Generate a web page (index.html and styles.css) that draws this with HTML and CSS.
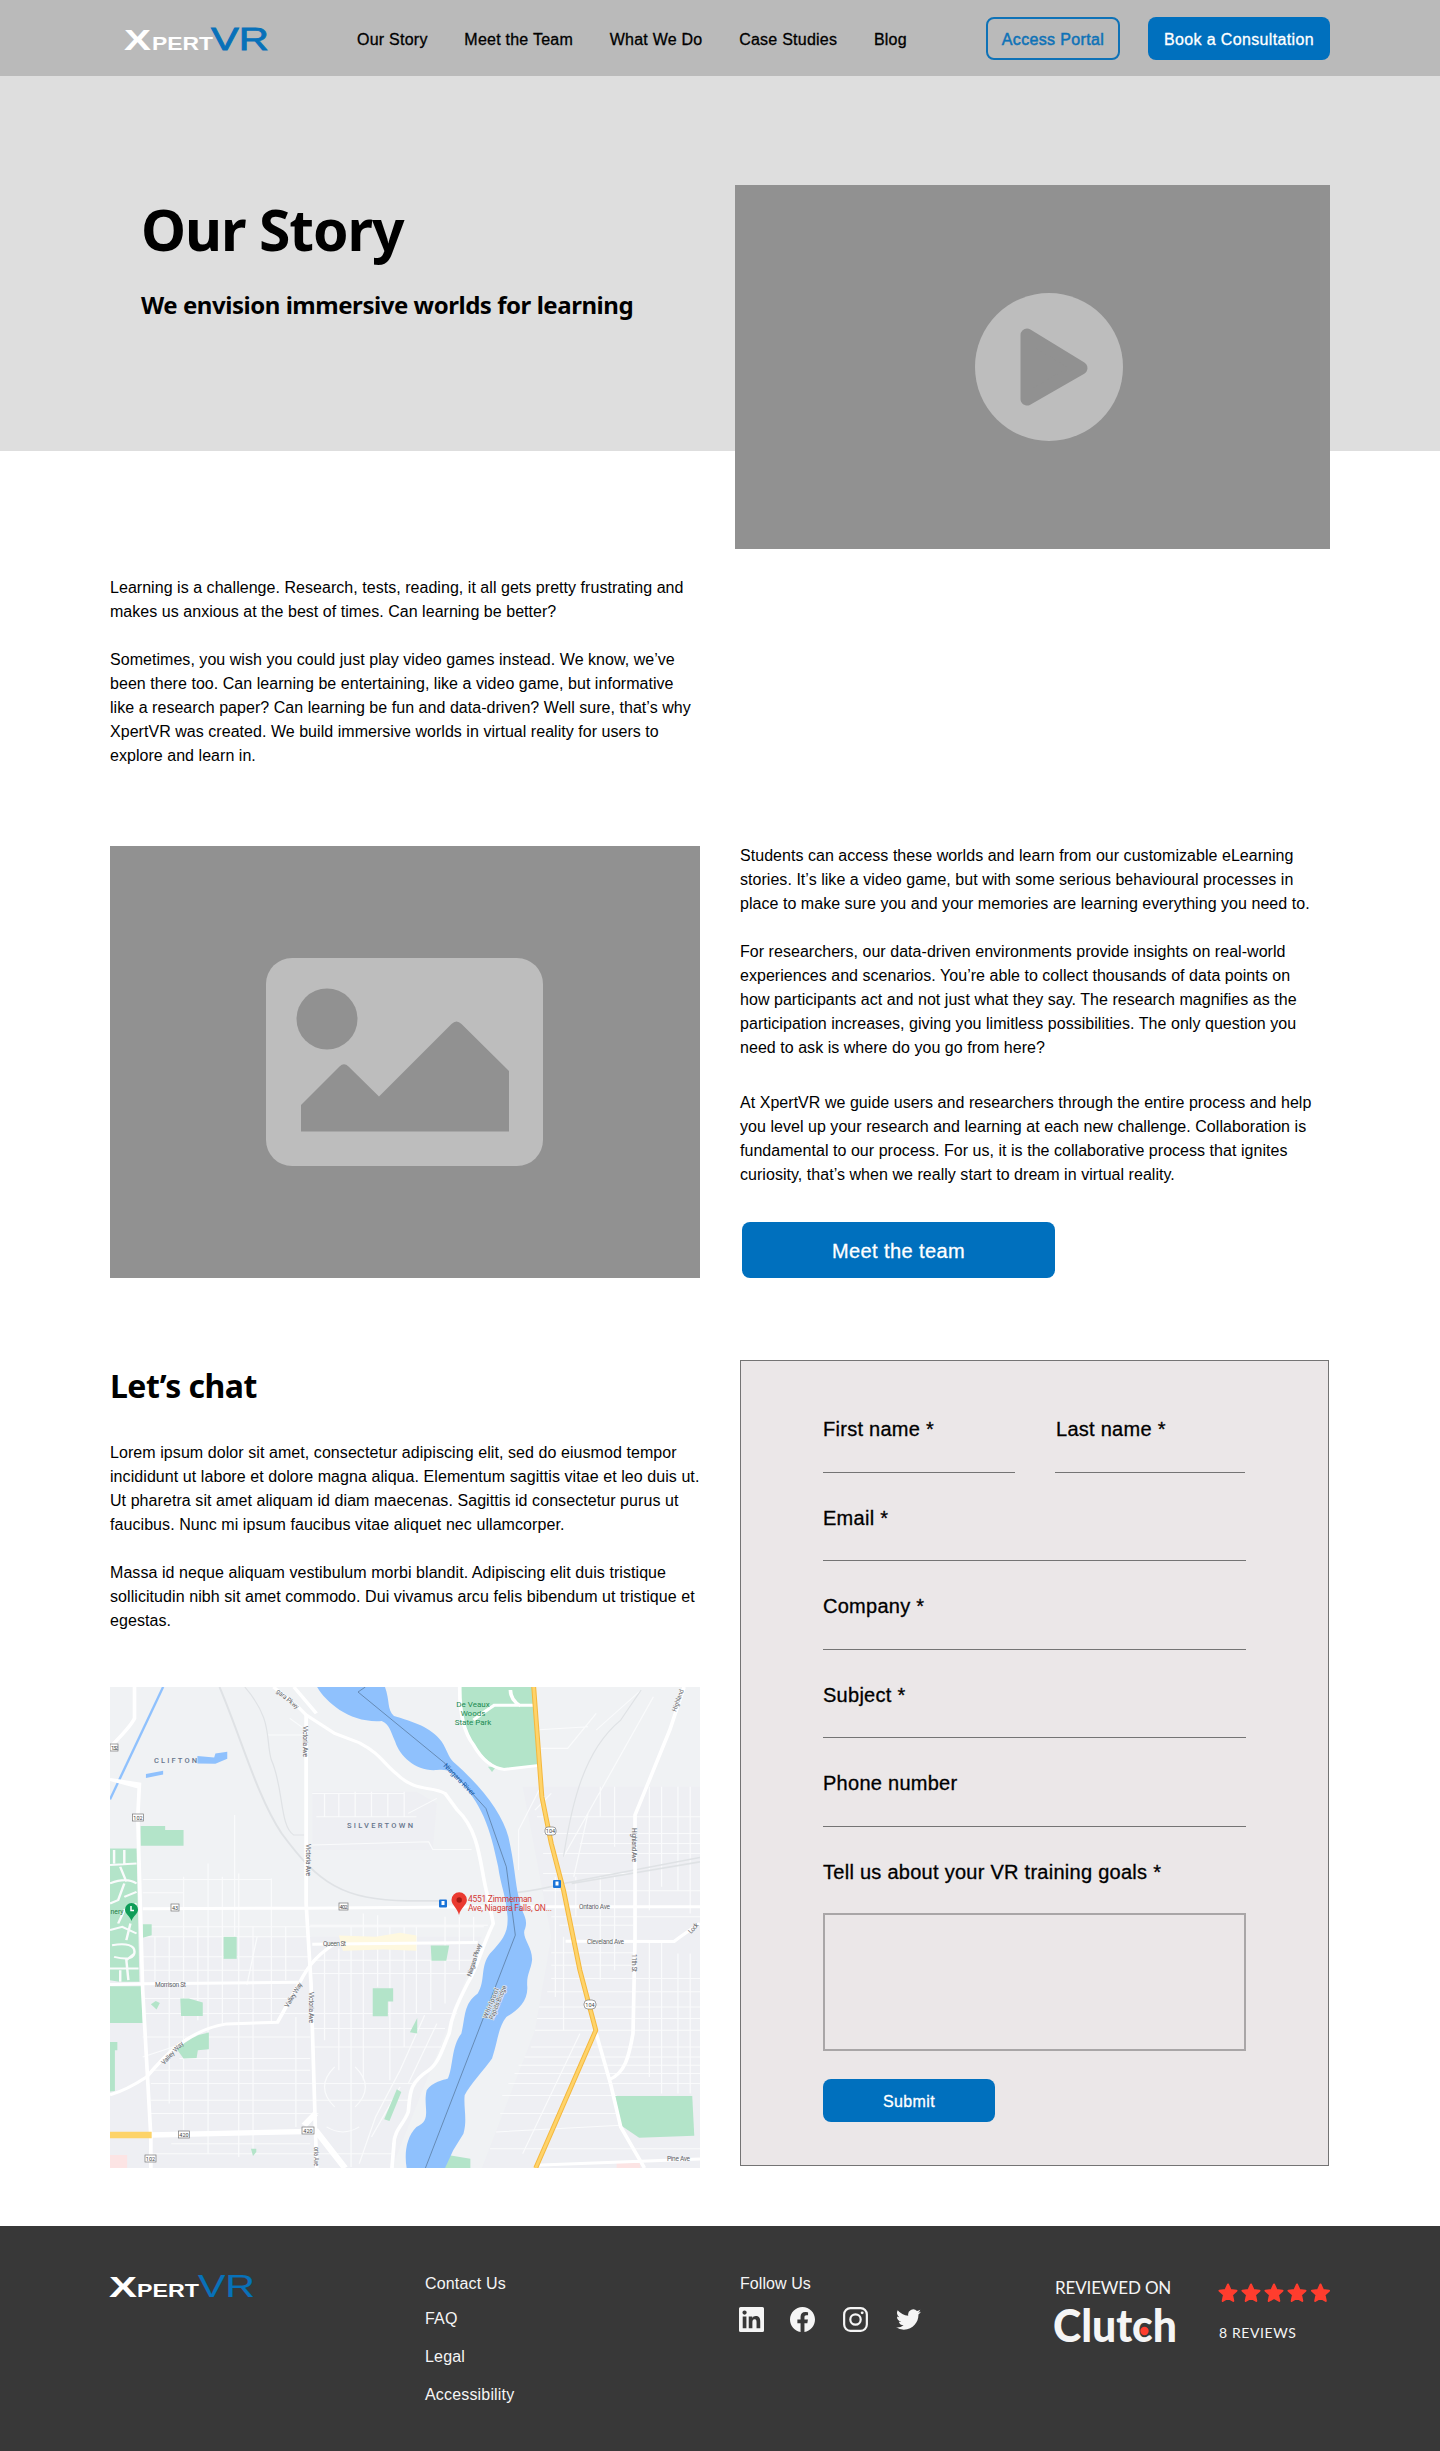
FILE: index.html
```html
<!DOCTYPE html>
<html lang="en">
<head>
<meta charset="utf-8">
<title>XpertVR – Our Story</title>
<link rel="stylesheet" href="styles.css">
</head>
<body>
<header class="topbar">
  <svg class="logo" viewBox="0 0 144 26" role="img" aria-label="XpertVR">
    <text class="logo-x" x="-1" y="22" textLength="27" lengthAdjust="spacingAndGlyphs">X</text>
    <text class="logo-pert" x="27" y="22" textLength="61" lengthAdjust="spacingAndGlyphs">PERT</text>
    <text class="logo-vr" x="86" y="22" textLength="58" lengthAdjust="spacingAndGlyphs">VR</text>
  </svg>
  <nav class="nav">
    <a>Our Story</a><a>Meet the Team</a><a>What We Do</a><a>Case Studies</a><a>Blog</a>
  </nav>
  <div class="actions">
    <a class="btn btn-outline">Access Portal</a>
    <a class="btn btn-book">Book a Consultation</a>
  </div>
</header>

<section class="hero">
  <div class="hero-copy">
    <h1>Our Story</h1>
    <h2>We envision immersive worlds for learning</h2>
  </div>
  <div class="video">
    <svg width="148" height="148" viewBox="0 0 148 148">
      <circle cx="74" cy="74" r="74" fill="#bdbdbd"/>
      <path d="M52 42L106 75L52 106Z" fill="#919191" stroke="#919191" stroke-width="13" stroke-linejoin="round"/>
    </svg>
  </div>
</section>

<main>
  <section class="intro copy">
    <p>Learning is a challenge. Research, tests, reading, it all gets pretty frustrating and<br>makes us anxious at the best of times. Can learning be better?</p>
    <p>Sometimes, you wish you could just play video games instead. We know, we’ve<br>been there too. Can learning be entertaining, like a video game, but informative<br>like a research paper? Can learning be fun and data-driven? Well sure, that’s why<br>XpertVR was created. We build immersive worlds in virtual reality for users to<br>explore and learn in.</p>
  </section>

  <section class="split story">
    <div class="photo">
      <svg width="277" height="208" viewBox="0 0 277 208">
        <rect width="277" height="208" rx="26" fill="#bdbdbd"/>
        <circle cx="61" cy="61" r="30.5" fill="#919191"/>
        <path d="M35 147L73.500 108.500Q78 104 82.500 108.500L113 138.500L185.500 66Q190.500 61 195.500 66L243 113V173.500H35Z" fill="#919191"/>
      </svg>
    </div>
    <div class="copy">
      <p>Students can access these worlds and learn from our customizable eLearning<br>stories. It’s like a video game, but with some serious behavioural processes in<br>place to make sure you and your memories are learning everything you need to.</p>
      <p>For researchers, our data-driven environments provide insights on real-world<br>experiences and scenarios. You’re able to collect thousands of data points on<br>how participants act and not just what they say. The research magnifies as the<br>participation increases, giving you limitless possibilities. The only question you<br>need to ask is where do you go from here?</p>
      <p class="closing">At XpertVR we guide users and researchers through the entire process and help<br>you level up your research and learning at each new challenge. Collaboration is<br>fundamental to our process. For us, it is the collaborative process that ignites<br>curiosity, that’s when we really start to dream in virtual reality.</p>
      <a class="btn btn-team">Meet the team</a>
    </div>
  </section>

  <section class="split contact">
    <div class="chat">
      <h3>Let’s chat</h3>
      <div class="copy">
        <p>Lorem ipsum dolor sit amet, consectetur adipiscing elit, sed do eiusmod tempor<br>incididunt ut labore et dolore magna aliqua. Elementum sagittis vitae et leo duis ut.<br>Ut pharetra sit amet aliquam id diam maecenas. Sagittis id consectetur purus ut<br>faucibus. Nunc mi ipsum faucibus vitae aliquet nec ullamcorper.</p>
        <p>Massa id neque aliquam vestibulum morbi blandit. Adipiscing elit duis tristique<br>sollicitudin nibh sit amet commodo. Dui vivamus arcu felis bibendum ut tristique et<br>egestas.</p>
      </div>
      <svg class="map" viewBox="0 0 590 481">
        <g transform="scale(.40859 .33356) translate(-50 -51)">
          <rect x="50" y="51" width="1444" height="1442" fill="#f0f2f4"/>
          <!-- built-up blocks -->
          <g fill="#eeeff3">
            <path d="M50 800H960L880 1060L740 1493H50Z"/>
            <path d="M545 365H800L850 400L840 540H545Z"/>
            <path d="M1060 350H1494V1493H960L1090 1080L1130 800Z"/>
          </g>
          <!-- side streets -->
          <g class="lane">
            <path d="M130 770H965M130 800H540M130 860H540M130 900H540M545 870H940M545 910H925M130 985H500M130 1030H900M545 1075H870M130 1100H540M545 1130H860M220 1165H540M150 1200H540M150 1240H790M150 1290H780M150 1330H560M200 1420H540M150 1450H740M130 628H445M130 668H230M540 765H975"/>
            <path d="M160 800V930M195 800V1300M230 620V1380M265 770V1050M290 580V1450M325 620V1060M365 610V1460M400 770V1440M445 625V1060M480 770V930M505 1040V1370M575 835V1110M610 835V1200M640 770V1490M670 730V1230M705 735V950M735 770V1230M770 770V1130M800 770V1030M835 870V1020M870 740V1000M905 740V900M940 740V820M355 435V800"/>
            <path d="M545 370H770M555 440H800M545 525L830 515L840 538H935M575 370V440M610 370V440M650 365V440M690 365V440M730 370V440M770 365V440M780 430L850 385"/>
            <path d="M1095 440H1494M1110 490H1494M1200 520H1494M1110 550H1494M1110 610H1330M1110 662H1494M1130 740H1494M1150 765H1330M1130 848H1330M1130 885H1340M1130 925H1494M1120 965H1494M1100 1010H1494M1095 1045H1494M1090 1080H1494M1080 1130H1494M1065 1160H1494M1050 1185H1494M1040 1210H1494M1025 1240H1494M1010 1276H1290M1005 1330H1300M995 1385L1300 1365M980 1435H1494"/>
            <path d="M1250 350V440M1285 350V530M1370 350V720M1400 350V650M1440 350V660M1470 350V730M1140 620V980M1160 800V1080M1190 620V740M1220 430L1185 620M1250 620V930M1285 620V900M1370 810V1220M1400 810V1270M1440 850V1270M1470 850V1270M1200 1090L1060 1450M1100 360L1050 480V600M1130 370L1090 420M1090 180L1220 170M1105 235H1170L1240 130M1240 180L1350 60M1380 80L1160 560"/>
            <path d="M820 1035L760 1200L700 1340L660 1480M850 1060L780 1240M760 1250L690 1400M600 1190Q550 1250 600 1310M650 1190Q700 1250 650 1310M580 1370Q620 1400 660 1370"/>
            <path d="M435 195H530M490 145L530 180M130 1160L230 1120M385 945L410 800"/>
          </g>
          <!-- railways -->
          <g fill="none" stroke="#dfe2e5" stroke-width="5">
            <path d="M318 51C370 200 410 380 470 490C560 640 620 690 780 692H860M1040 668Q1100 660 1160 640L1494 562M1180 640L1494 575"/>
            <path d="M380 51C450 150 430 210 445 270C475 350 465 470 500 495H525M1160 560C1180 400 1210 240 1300 150L1350 60" stroke-width="3"/>
          </g>
          <!-- parks -->
          <g fill="#b3e4c9">
            <path d="M906 51H1087L1099 284L1014 300C970 280 935 230 920 170Q905 100 906 51Z"/>
            <path d="M975 290H995L985 306Z"/>
            <path d="M125 468H185V480H230V527H125Z"/>
            <path d="M50 535H115L122 935H72L50 930Z"/>
            <path d="M130 762H152V795L130 803Z"/>
            <path d="M50 948H128L130 1058H50Z"/>
            <path d="M328 800H360V866H328Z"/>
            <path d="M835 826H880L873 872H837Z"/>
            <path d="M693 954H743V994H730V1038H693Z"/>
            <path d="M222 985H243L277 997V1037H224Z"/>
            <path d="M150 1002L162 992L172 998L164 1018Z"/>
            <path d="M292 1087V1137L265 1140L262 1163L230 1165L214 1138Q250 1095 292 1087Z"/>
            <path d="M50 1115H68V1140H62V1262L50 1264Z"/>
            <path d="M802 1043V1090L784 1086Z"/>
            <path d="M752 1257L763 1265L734 1352L721 1347Z"/>
            <path d="M1286 1277H1475L1480 1396L1345 1402L1300 1365Z"/>
            <path d="M877 1454L932 1465V1493H868Z"/>
            <path d="M395 1435H408V1445L400 1457Z"/>
          </g>
          <g class="lane path">
            <path d="M50 585L115 580M60 540V580M85 540V580M50 640Q90 620 115 640M75 590L90 635M50 700L70 690L85 640M70 760L85 720L115 700M50 780L80 770L115 790M85 680L115 665M55 825Q110 815 110 845T60 860M110 850L90 870L95 930M50 895H120M75 900V935M100 760L90 810"/>
          </g>
          <path d="M50 1454H92V1493H50ZM1290 1478L1348 1475V1493H1290Z" fill="#fce4e4"/>
          <path d="M610 796L700 800L760 788L800 796V842L720 838L620 842Z" fill="#fef8df"/>
          <!-- water -->
          <g fill="#8fc1fd">
            <path d="M557 51H723C735 90 728 120 745 138C790 155 835 170 862 215C875 240 878 260 890 275C960 350 1010 430 1025 500C1040 580 1042 640 1050 680C1055 730 1075 740 1066 775C1055 800 1085 830 1083 870C1080 900 1070 910 1071 945C1075 990 1050 1020 1020 1040C1000 1070 1000 1110 985 1165C965 1200 930 1245 918 1275C915 1310 925 1350 915 1390L890 1440L870 1493H776C770 1450 775 1400 800 1370C840 1350 815 1310 825 1260C840 1235 865 1230 877 1225C890 1190 885 1130 910 1090C920 1040 915 1000 950 970C970 930 955 890 980 850C1010 810 1025 790 1023 740C1020 680 1005 640 1000 590C980 470 960 400 900 325C885 305 875 295 850 300C800 305 760 260 748 215C735 180 735 165 715 153C640 160 580 100 557 51Z"/>
            <path d="M264 258L305 262L308 250L337 245V266L308 281L264 280Z"/>
            <path d="M138 312L180 302V313L138 324Z"/>
          </g>
          <path d="M180 51L50 388" stroke="#8fc1fd" stroke-width="6"/>
          <path d="M675 51L657 66L870 280L970 415L1020 590L1042 795L822 1493" fill="none" stroke="#57789a" stroke-width="2"/>
          <!-- main roads -->
          <g fill="none" stroke="#fff" stroke-width="9">
            <path d="M110 51V145Q100 170 55 225M50 328L122 342L118 440L130 960L150 1400V1493M50 328L122 352"/>
            <path d="M450 51L510 110L530 135L600 190L660 218C710 250 720 280 750 310C800 370 835 345 870 370L900 420C960 490 955 600 975 680L988 760C960 830 950 890 925 940C900 1000 885 1040 880 1090C865 1130 855 1180 830 1200C780 1240 785 1270 780 1325C770 1360 745 1380 745 1420L740 1493"/>
            <path d="M530 135V700L542 940L553 1390L556 1493M500 51L555 130M130 716L530 714L965 710M1060 710L1494 710"/>
            <path d="M545 822L950 817M50 943L130 941L510 936M1165 813L1430 814Q1480 770 1494 760"/>
            <path d="M595 825C550 860 530 900 515 935L460 1056L335 1061C240 1080 180 1160 140 1220Q90 1260 50 1274"/>
            <path d="M1455 51L1420 180L1335 435V800L1330 1090C1320 1160 1310 1210 1272 1228M1240 1090L1275 1240L1300 1370L1358 1493M1090 1485L1300 1475L1494 1466M906 51Q905 170 940 225Q970 290 1014 298L1100 286M940 150Q960 130 990 106H1088M1030 60Q1030 90 1055 108"/>
          </g>
          <path d="M150 1394L555 1383L625 1493M553 1330L525 1365" fill="none" stroke="#fff" stroke-width="16"/>
          <path d="M50 1394H152" stroke="#fdd368" stroke-width="20"/>
          <path d="M1087 51L1107 380L1130 520L1160 660L1200 900L1239 1080L1092 1493" fill="none" stroke="#f5b83d" stroke-width="12" stroke-linejoin="round"/>
          <path d="M1087 51L1107 380L1130 520L1160 660L1200 900L1239 1080L1092 1493" fill="none" stroke="#fed36a" stroke-width="7" stroke-linejoin="round"/>
        </g>
        <!-- route shields -->
        <g class="shield">
          <rect x="0" y="57" width="8" height="7"/><rect x="22.500" y="127" width="11" height="7"/><rect x="61" y="217" width="8" height="7"/><rect x="229" y="216" width="9" height="7"/><rect x="68.500" y="444" width="11" height="7"/><rect x="192" y="440" width="12" height="7"/><rect x="35" y="468" width="11" height="7"/>
          <rect x="435" y="140" width="11" height="8" rx="3"/><rect x="474" y="313" width="12" height="9" rx="4"/>
        </g>
        <g class="num">
          <text x="4.500" y="62.500" textLength="7">132</text><text x="28" y="132.500">102</text><text x="65" y="222.500">43</text><text x="233.500" y="221.500" textLength="8">402</text><text x="74" y="449.500">420</text><text x="198" y="445.500">420</text><text x="40.500" y="473.500">102</text><text x="440.500" y="146">104</text><text x="480" y="319.500">104</text>
        </g>
        <!-- place names -->
        <g class="district">
          <text x="44" y="75.500" textLength="43">CLIFTON</text>
          <text x="237" y="140.500" textLength="66">SILVERTOWN</text>
        </g>
        <g class="park"><text x="363" y="20">De Veaux</text><text x="363" y="29">Woods</text><text x="363" y="38">State Park</text></g>
        <g class="street">
          <text x="213" y="259" textLength="23">Queen St</text>
          <text x="45" y="299.500" textLength="31">Morrison St</text>
          <text x="469" y="222" textLength="31">Ontario Ave</text>
          <text x="477" y="256.500" textLength="37">Cleveland Ave</text>
          <text x="557" y="474" textLength="23">Pine Ave</text>
          <text transform="translate(193 39) rotate(90)" textLength="31">Victoria Ave</text>
          <text transform="translate(195.500 157) rotate(90)" textLength="32">Victoria Ave</text>
          <text transform="translate(199 305) rotate(90)" textLength="31">Victoria Ave</text>
          <text transform="translate(204 460) rotate(90)" textLength="19" lengthAdjust="spacingAndGlyphs">oria Ave</text>
          <text transform="translate(522 141) rotate(90)" textLength="34">Highland Ave</text>
          <text transform="translate(522 267) rotate(90)" textLength="18">11th St</text>
          <text transform="translate(566 25) rotate(-70)" textLength="23" lengthAdjust="spacingAndGlyphs">Highland</text>
          <text transform="translate(166 5) rotate(40)" textLength="27" lengthAdjust="spacingAndGlyphs">gara Pkwy</text>
          <text transform="translate(361 290) rotate(-72)" textLength="34">Niagara Pkwy</text>
          <text transform="translate(178 321) rotate(-59)" textLength="28">Valley Way</text>
          <text transform="translate(54 378) rotate(-47)" textLength="29">Valley Way</text>
          <text transform="translate(581 247) rotate(-48)" textLength="12">Lock</text>
          <g class="bridge">
            <text transform="translate(377 332) rotate(-68)" textLength="32">Whirlpool</text>
            <text transform="translate(383 333) rotate(-68)" textLength="36">Rapids Bridge</text>
          </g>
        </g>
        <text class="river" transform="translate(333 79) rotate(46)" textLength="42">Niagara River</text>
        <text class="cemetery" x="0.500" y="227" textLength="13" lengthAdjust="spacingAndGlyphs">nery</text>
        <!-- markers -->
        <path d="M21.500 234C20 229 15 227 15 222.500A6.500 6.500 0 0 1 28 222.500C28 227 23 229 21.500 234Z" fill="#0f9d58"/>
        <path d="M21 219V223.500H24" fill="none" stroke="#fff" stroke-width="1.500"/>
        <g fill="#1a73d8"><rect x="329" y="212.500" width="8" height="8" rx="1"/><rect x="443" y="193" width="8" height="8" rx="1"/></g>
        <g fill="#fff"><rect x="331.500" y="214" width="3" height="4"/><rect x="445.500" y="194.500" width="3" height="4"/></g>
        <path d="M349 228C347.500 221 341.500 218 341.500 213A7.700 7.700 0 0 1 356.900 213C356.900 218 350.500 221 349 228Z" fill="#ea3a30"/>
        <circle cx="349.200" cy="213" r="2.700" fill="#a51b14"/>
        <g class="pin-label"><text x="358" y="214.500" textLength="64">4551 Zimmerman</text><text x="358" y="223.500" textLength="84">Ave, Niagara Falls, ON...</text></g>
      </svg>
    </div>

    <form class="form">
      <div class="row">
        <label class="field">First name *<span class="line"></span></label>
        <label class="field">Last name *<span class="line"></span></label>
      </div>
      <label class="field">Email *<span class="line"></span></label>
      <label class="field">Company *<span class="line"></span></label>
      <label class="field">Subject *<span class="line"></span></label>
      <label class="field">Phone number<span class="line"></span></label>
      <label class="field goals">Tell us about your VR training goals *<span class="area"></span></label>
      <a class="btn btn-submit">Submit</a>
    </form>
  </section>
</main>

<footer class="footer">
  <div class="foot-brand">
    <svg class="logo" viewBox="0 0 144 26" role="img" aria-label="XpertVR">
      <text class="logo-x" x="-1" y="22" textLength="28" lengthAdjust="spacingAndGlyphs">X</text>
      <text class="logo-pert" x="27" y="22" textLength="62" lengthAdjust="spacingAndGlyphs">PERT</text>
      <text class="logo-vr light" x="88" y="22" textLength="57" lengthAdjust="spacingAndGlyphs">VR</text>
    </svg>
  </div>
  <div class="foot-links"><a>Contact Us</a><a>FAQ</a><a>Legal</a><a>Accessibility</a></div>
  <div class="foot-social">
    <span>Follow Us</span>
    <div class="icons">
      <svg width="25" height="25" viewBox="0 0 24 24"><path fill="#f5f5f5" fill-rule="evenodd" d="M1.500 0h21A1.500 1.500 0 0 1 24 1.500v21a1.500 1.500 0 0 1-1.500 1.500h-21A1.500 1.500 0 0 1 0 22.500v-21A1.500 1.500 0 0 1 1.500 0ZM3.560 9h3.560v11.450H3.560ZM5.340 3.300a2.060 2.060 0 1 1 0 4.130 2.060 2.060 0 0 1 0-4.130ZM9.350 9h3.410v1.570c.5-.9 1.640-1.850 3.370-1.850 3.600 0 4.270 2.370 4.270 5.460v6.270h-3.560v-5.570c0-1.330-.02-3.040-1.850-3.040s-2.130 1.450-2.130 2.940v5.670H9.350Z"/></svg>
      <svg width="25" height="25" viewBox="0 0 24 24"><path fill="#f5f5f5" d="M24 12.070C24 5.400 18.630 0 12 0S0 5.400 0 12.070C0 18.100 4.390 23.090 10.130 24v-8.440H7.080v-3.490h3.050V9.410c0-3.020 1.790-4.690 4.530-4.690 1.310 0 2.680.24 2.680.24v2.970h-1.510c-1.490 0-1.960.93-1.960 1.890v2.250h3.330l-.53 3.490h-2.800V24C19.610 23.090 24 18.100 24 12.070Z"/></svg>
      <svg width="25" height="25" viewBox="0 0 24 24" fill="none" stroke="#f5f5f5" stroke-width="2.100"><rect x="1.100" y="1.100" width="21.800" height="21.800" rx="6"/><circle cx="12" cy="12" r="5"/><circle cx="18.400" cy="5.600" r="1.400" fill="#f5f5f5" stroke="none"/></svg>
      <svg width="25" height="25" viewBox="0 0 24 24"><path fill="#f5f5f5" d="M23.950 4.570a10 10 0 0 1-2.820.77 4.960 4.960 0 0 0 2.160-2.720c-.95.560-2 .96-3.130 1.180a4.920 4.920 0 0 0-8.380 4.480A13.930 13.930 0 0 1 1.640 3.160a4.920 4.920 0 0 0 1.520 6.570 4.900 4.900 0 0 1-2.230-.61v.06a4.920 4.920 0 0 0 3.950 4.830 5 5 0 0 1-2.210.08 4.940 4.940 0 0 0 4.600 3.420A9.870 9.870 0 0 1 0 19.540a13.990 13.990 0 0 0 7.550 2.210c9.050 0 14-7.500 14-13.990 0-.21 0-.42-.02-.63a9.940 9.940 0 0 0 2.420-2.560Z"/></svg>
    </div>
  </div>
  <div class="clutch">
    <span class="reviewed">REVIEWED ON</span>
    <svg width="124" height="40" viewBox="0 0 124 40" role="img" aria-label="Clutch">
      <text class="clutch-name" x="-2" y="35" textLength="124" lengthAdjust="spacingAndGlyphs">Clutch</text>
      <circle cx="89.500" cy="24" r="4.200" fill="#ff3d2e"/>
    </svg>
  </div>
  <div class="rating">
    <svg width="113" height="20" viewBox="0 0 113 20" fill="#ff3d2e" stroke="#ff3d2e" stroke-width="2" stroke-linejoin="round">
      <defs><path id="star" d="M10 1.500L12.500 7L18.500 7.700L14 11.800L15.300 18L10 15L4.700 18L6 11.800L1.500 7.700L7.500 7Z"/></defs>
      <use href="#star"/><use href="#star" x="23"/><use href="#star" x="46"/><use href="#star" x="69"/><use href="#star" x="92.500"/>
    </svg>
    <span class="count">8 REVIEWS</span>
  </div>
</footer>
</body>
</html>
```

FILE: styles.css
```css
* { box-sizing: border-box; }

body {
  margin: 0;
  background: #fff;
  color: #000;
  font: 16px/24px "Liberation Sans", Arial, sans-serif;
}

h1, h2, h3, p { margin: 0; }

h1, h2, h3 { font-family: "Noto Sans", sans-serif; font-weight: 700; }

/* header */
.topbar {
  display: flex;
  height: 76px;
  padding: 0 110px 0 125px;
  background: #bababa;
}

.logo { display: block; width: 144px; height: 26px; overflow: visible; }
.topbar .logo { margin-top: 28px; }
.logo-x { font: 700 29px "Liberation Sans", sans-serif; fill: #fff; }
.logo-pert { font: 700 18px "Liberation Sans", sans-serif; fill: #fff; }
.logo-vr { font: 400 31.500px "Liberation Sans", sans-serif; fill: #0871b9; stroke: #0871b9; stroke-width: 0.8px; }
.logo-vr.light { stroke-width: 0.2px; }

.nav {
  display: flex;
  gap: 36.700px;
  margin: 28px 0 0 88px;
  letter-spacing: 0.240px;
  white-space: nowrap;
  -webkit-text-stroke: 0.300px currentColor;
}

.actions { display: flex; gap: 28px; margin: 17px 0 0 auto; }

.btn {
  display: flex;
  align-items: center;
  justify-content: center;
  height: 43px;
  padding-top: 2px;
  border-radius: 8px;
  background: #0070be;
  color: #fff;
  letter-spacing: 0.360px;
  white-space: nowrap;
  -webkit-text-stroke: 0.300px currentColor;
}

.btn-outline { width: 134px; border: 2px solid #0e72b7; background: none; color: #0e72b7; -webkit-text-stroke-width: 0.500px; }
.btn-book { width: 182px; }

/* hero */
.hero {
  display: flex;
  justify-content: space-between;
  height: 375px;
  padding: 109px 110px 0 141px;
  background: #dedede;
}

.hero h1 { margin-top: 6px; font-size: 57px; line-height: 76px; letter-spacing: -1.100px; }
.hero h2 { margin-top: 20px; font-size: 24px; line-height: 36px; letter-spacing: -0.460px; }

.video, .photo { display: flex; align-items: center; justify-content: center; background: #919191; }
.video { width: 595px; height: 364px; padding-left: 32px; }

/* body */
main { padding: 125px 110px 60px; }

.copy { letter-spacing: 0.040px; white-space: nowrap; }
.copy p + p { margin-top: 24px; }
.copy p.closing { margin-top: 31px; }

.split { display: grid; grid-template-columns: 590px 590px; column-gap: 40px; }

.story { margin-top: 78px; }
.photo { height: 432px; padding-right: 1px; }
.story .copy { margin-top: -2px; }

.btn-team {
  width: 313px;
  height: 56px;
  margin: 35px 0 0 2px;
  font-size: 20px;
  letter-spacing: 0.400px;
}

.contact { margin-top: 82px; }
.chat h3 { padding-top: 4px; font-size: 32px; line-height: 44px; letter-spacing: -0.550px; }
.chat .copy { margin-top: 33px; letter-spacing: 0.070px; }
.map { display: block; width: 590px; height: 481px; margin-top: 54px; }

/* map parts */
.lane { fill: none; stroke: #fafbfc; stroke-width: 3px; }
.lane.path { stroke-width: 6px; }
.shield { fill: #fff; stroke: #777; stroke-width: 0.700px; }
.num { font: 5.500px Roboto, sans-serif; fill: #444; text-anchor: middle; }
.district { font: 500 7.500px Roboto, sans-serif; fill: #66758c; }
.park { font: 8px Roboto, sans-serif; fill: #1b8a52; text-anchor: middle; }
.street { font: 6.500px Roboto, sans-serif; fill: #5d6166; }
.bridge { stroke: #e4e9ee; stroke-width: 1.500px; paint-order: stroke; }
.river { font: 7px Roboto, sans-serif; fill: #1559a8; }
.cemetery { font: 8px Roboto, sans-serif; fill: #1b7a45; }
.pin-label { font: 8.500px Roboto, sans-serif; fill: #d23a36; }

/* contact form */
.form {
  width: 589px;
  height: 806px;
  padding: 56px 82px 0;
  border: 1px solid #747474;
  background: #ebe7e8;
  font-size: 20px;
  letter-spacing: 0.270px;
}

.row { display: grid; grid-template-columns: 192px 190px; column-gap: 40px; }
.row .field:last-child { text-indent: 1px; }

.field {
  display: flex;
  flex-direction: column;
  height: 88.600px;
  white-space: nowrap;
  -webkit-text-stroke: 0.300px currentColor;
}

.line { height: 1px; margin-top: 30.500px; background: #747474; }
.goals { height: auto; }
.area { height: 138px; margin-top: 29.500px; border: 2px solid #a9a6a7; }
.btn-submit { width: 172px; margin-top: 28px; font-size: 16px; }

/* footer */
.footer {
  display: grid;
  grid-template-columns: 314px 315px 315px 164px 1fr;
  height: 227px;
  margin-top: -2px;
  padding: 46px 109px 0 110px;
  background: #383838;
  color: #f5f5f5;
}

.foot-brand { padding-top: 3px; }
.foot-links { display: flex; flex-direction: column; padding-left: 1px; letter-spacing: 0.170px; }
.foot-links a + a { margin-top: 14px; }
.foot-links a:nth-child(2) { margin-top: 11px; }
.foot-social { padding-left: 1px; letter-spacing: 0.080px; }
.icons { display: flex; gap: 26px; margin: 11px 0 0 -1px; }
.icons svg + svg + svg { margin-left: 2px; }
.clutch { display: flex; flex-direction: column; padding-left: 1px; }
.reviewed { font: 17px/24px Lato, sans-serif; letter-spacing: -0.150px; margin-top: 4px; }
.clutch svg { margin-top: 7px; overflow: visible; }
.clutch-name { font: 900 46px Lato, sans-serif; fill: #f5f5f5; }
.rating { display: flex; flex-direction: column; padding-left: 1px; }
.rating svg { margin-top: 11px; margin-left: -1px; overflow: visible; }
.count { font: 14px/18px Lato, sans-serif; letter-spacing: 0.600px; margin-top: 21px; }
```
